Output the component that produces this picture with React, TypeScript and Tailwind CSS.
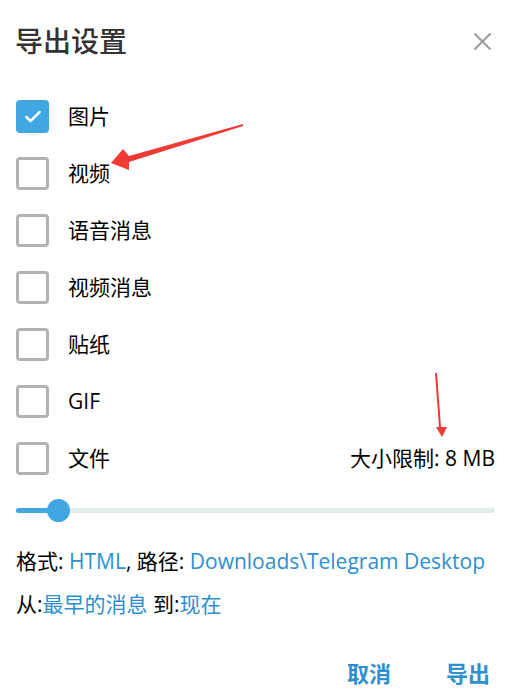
import { Check } from "lucide-react";

const items = [
  { label: "图片", checked: true },
  { label: "视频", checked: false },
  { label: "语音消息", checked: false },
  { label: "视频消息", checked: false },
  { label: "贴纸", checked: false },
  { label: "GIF", checked: false },
  { label: "文件", checked: false },
];

function Box({ checked }: { checked: boolean }) {
  if (checked) {
    return (
      <div className="w-[33px] h-[33px] rounded-[4px] bg-[#40a7e3] flex items-center justify-center">
        <Check size={20} strokeWidth={3} className="text-white" />
      </div>
    );
  }
  return <div className="w-[33px] h-[33px] rounded-[4px] border-[3px] border-[#b3b3b3]" />;
}

export default function App() {
  return (
    <main
      className="relative w-[525px] h-[697px] bg-white text-black overflow-hidden"
      style={{ fontFamily: '"Open Sans", "Noto Sans CJK SC", sans-serif' }}
    >
      <header className="h-[82px] flex items-center justify-between pl-[15px] pr-[33px]">
        <h1 className="text-[28px] font-medium text-[#333]">导出设置</h1>
        <svg width="19" height="19" viewBox="0 0 19 19" className="text-[#9a9a9a]">
          <path d="M1.5 1.5 L17.5 17.5 M17.5 1.5 L1.5 17.5" stroke="currentColor" strokeWidth="2" />
        </svg>
      </header>

      <div className="mt-[6px] px-[16px]">
        {items.map((item) => (
          <div key={item.label} className="h-[57px] flex items-center">
            <Box checked={item.checked} />
            <span className="ml-[19px] text-[21px]">{item.label}</span>
            {item.label === "文件" && (
              <span className="ml-auto mr-[14px] text-[21px]">大小限制: 8 MB</span>
            )}
          </div>
        ))}
      </div>

      <div className="h-[46px] px-[16px] pr-[30px] flex items-center">
        <div className="relative w-full h-[5px] rounded-full bg-[#e3ebeb]">
          <div className="absolute left-0 top-0 h-full w-[43px] rounded-full bg-[#40a7e3]" />
          <div className="absolute left-[31px] top-[-9px] w-[23px] h-[23px] rounded-full bg-[#40a7e3]" />
        </div>
      </div>

      <p className="mt-[13px] px-[16px] text-[21px] leading-[30px] whitespace-nowrap">
        格式: <span className="text-[#2d8fcf]">HTML</span>, 路径:{" "}
        <span className="text-[#2d8fcf]">Downloads\Telegram Desktop</span>
      </p>
      <p className="mt-[13px] px-[16px] text-[21px] leading-[30px]">
        从:<span className="text-[#2d8fcf]">最早的消息</span> 到:<span className="text-[#2d8fcf]">现在</span>
      </p>

      <div className="mt-[39px] h-[30px] flex justify-end items-center gap-[55px] pr-[35px]">
        <button className="text-[22px] font-bold text-[#2d8fcf]">取消</button>
        <button className="text-[22px] font-bold text-[#2d8fcf]">导出</button>
      </div>

      <svg className="absolute inset-0 pointer-events-none" width="525" height="697">
        <polygon points="243,124 129,156 123,149 111,163 129,170 129,162 243,126" fill="#f03a35" />
        <polygon points="435,373 439,427 436,427 442,437 447,427 441,427 437,373" fill="#f03a35" />
      </svg>
    </main>
  );
}
